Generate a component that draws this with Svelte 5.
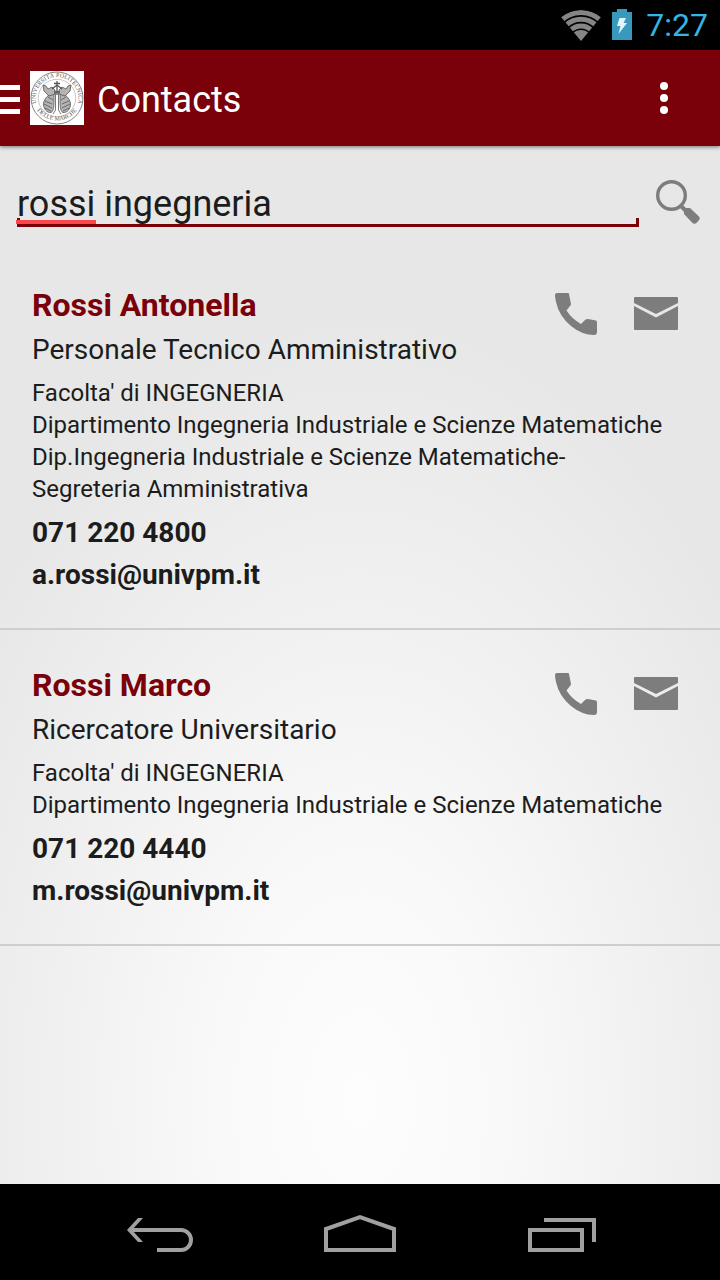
<script>
  let query = $state('rossi ingegneria');

  const contacts = [
    {
      name: 'Rossi Antonella',
      role: 'Personale Tecnico Amministrativo',
      units: [
        "Facolta' di INGEGNERIA",
        'Dipartimento Ingegneria Industriale e Scienze Matematiche',
        'Dip.Ingegneria Industriale e Scienze Matematiche-Segreteria Amministrativa'
      ],
      phone: '071 220 4800',
      email: 'a.rossi@univpm.it'
    },
    {
      name: 'Rossi Marco',
      role: 'Ricercatore Universitario',
      units: [
        "Facolta' di INGEGNERIA",
        'Dipartimento Ingegneria Industriale e Scienze Matematiche'
      ],
      phone: '071 220 4440',
      email: 'm.rossi@univpm.it'
    }
  ];
</script>

<div class="screen">
  <div class="status">
    <svg width="40" height="32" viewBox="0 0 40 32" aria-hidden="true">
      <defs><clipPath id="fan"><path d="M20 32 L0 8 Q20 -6 40 8Z" /></clipPath></defs>
      <g clip-path="url(#fan)" fill="none" stroke="#858585">
        <circle cx="20" cy="32" r="28.500" stroke-width="5" />
        <circle cx="20" cy="32" r="21.700" stroke-width="5" />
        <circle cx="20" cy="32" r="15" stroke-width="5" />
        <circle cx="20" cy="32" r="5.500" stroke-width="11" />
      </g>
    </svg>
    <svg width="20" height="32" viewBox="0 0 20 32" aria-hidden="true">
      <path d="M0 3H5V0H15V3H20V31H0Z" fill="#3899bd" />
      <path d="M7.500 9H14L11.500 14H15L6.500 25L8.500 17H5Z" fill="#e2f5fc" />
    </svg>
    <span class="clock">7:27</span>
  </div>

  <header class="bar">
    <button class="drawer" aria-label="Open navigation">
      <svg width="20" height="30" viewBox="0 0 20 30"><path d="M0 0H20V5H0ZM0 12H20V17H0ZM0 24H20V29H0Z" fill="#fff" /></svg>
    </button>
    <svg class="seal" width="54" height="54" viewBox="0 0 54 54" aria-hidden="true">
      <rect width="54" height="54" fill="#fff" />
      <defs>
        <path id="arcTop" d="M7.500 36A21.300 21.300 0 1 1 46.500 36" />
        <path id="arcBottom" d="M6 38A25 25 0 0 0 48 38" />
        <g id="griffin" fill="#b4b4b4" stroke="#555" stroke-width="0.8">
          <path d="M24 22C19 23 14 27 13.500 33C13.500 38 17 42 21 41.500C24 40 24 34 24 27Z" />
          <path d="M13 14L16 15L18 18L22 16L25 19V23L19 25L14 20Z" />
          <path d="M15 30L22 33M14 33L22 37M15 37L21 40M18 26L23 29M25.500 22V39L23 43" fill="none" />
        </g>
      </defs>
      <g fill="none" stroke="#777">
        <circle cx="27" cy="27" r="26" stroke-width="0.9" />
        <circle cx="27" cy="27" r="18.700" stroke-width="0.4" />
      </g>
      <g class="motto">
        <text><textPath href="#arcTop" startOffset="50%" text-anchor="middle">UNIVERSITÀ POLITECNICA</textPath></text>
        <text><textPath href="#arcBottom" startOffset="50%" text-anchor="middle">DELLE MARCHE</textPath></text>
      </g>
      <use href="#griffin" />
      <use href="#griffin" transform="translate(54 0) scale(-1 1)" />
      <path d="M27 10V24M24 12.500H30M22 18L27 14L32 18M24 21H30" fill="none" stroke="#555" stroke-width="1.300" />
    </svg>
    <h1>Contacts</h1>
    <button class="more" aria-label="More options">
      <svg width="8" height="32" viewBox="0 0 8 32" fill="#fff"><circle cx="4" cy="4" r="4" /><circle cx="4" cy="16" r="4" /><circle cx="4" cy="28" r="4" /></svg>
    </button>
  </header>

  <main>
    <form class="search" onsubmit={(e) => e.preventDefault()}>
      <div class="field">
        <input type="text" aria-label="Search contacts" spellcheck="false" bind:value={query} />
        <span class="typo"></span>
      </div>
      <button aria-label="Search">
        <svg width="44" height="44" viewBox="0 0 44 44">
          <circle cx="15.500" cy="15.500" r="13.800" fill="none" stroke="#7d7d7d" stroke-width="3.400" />
          <path d="M25 26L31 32" stroke="#7d7d7d" stroke-width="4" />
          <path d="M29 28H34L43 36.500Q44.500 38.500 43 40L40.500 43Q38.500 44.500 36.500 43L28 34V29Z" fill="#7d7d7d" />
        </svg>
      </button>
    </form>

    <ul>
      {#each contacts as c}
        <li>
          <div class="actions">
            <button aria-label="Call {c.name}">
              <svg width="44" height="44" viewBox="0 0 44 44"><path d="M3 1H14Q15 1 15 2L17 12Q17 13 16 14L12.500 18.500Q18 27 27 32L31 28Q32 27 34 27L42 28.500Q43 29 43 30V40Q43 43 40 43Q28 43 17 34Q5 24 2 10Q1 6 1 3Q1 1 3 1Z" fill="#7d7d7d" /></svg>
            </button>
            <button aria-label="Email {c.name}">
              <svg width="44" height="44" viewBox="0 0 44 44" fill="#7d7d7d"><path d="M1 5H43Q44 5 44 6V11L22 22L0 11V6Q0 5 1 5Z" /><path d="M0 14L22 25.500L44 14V37Q44 38 43 38H1Q0 38 0 37Z" /></svg>
            </button>
          </div>
          <h2>{c.name}</h2>
          <p class="role">{c.role}</p>
          <div class="units">
            {#each c.units as unit}<p>{unit}</p>{/each}
          </div>
          <p class="reach">{c.phone}</p>
          <p class="reach">{c.email}</p>
        </li>
      {/each}
    </ul>
  </main>

  <nav aria-label="System">
    <button aria-label="Back">
      <svg width="72" height="40" viewBox="0 0 72 40" fill="none" stroke="#a0a0a0" stroke-width="4"><path d="M8 16H57A10 10 0 0 1 57 36H33" /><path d="M3 16L14 4H19L8 16L19 28H14Z" fill="#a0a0a0" stroke="none" /></svg>
    </button>
    <button aria-label="Home">
      <svg width="72" height="40" viewBox="0 0 72 40" fill="none" stroke="#a0a0a0" stroke-width="4"><path d="M2 36V15L36 3L70 15V36Z" /></svg>
    </button>
    <button aria-label="Recent apps">
      <svg width="72" height="40" viewBox="0 0 72 40" fill="none" stroke="#a0a0a0" stroke-width="4"><path d="M6 16H58V36H6ZM20 6H70V28" /></svg>
    </button>
  </nav>
</div>

<style>
  :global(body) {
    margin: 0;
    background: #000;
  }
  .screen {
    min-height: 100vh;
    display: flex;
    flex-direction: column;
    font-family: Roboto, sans-serif;
    color: #1c1c1c;
  }
  button {
    border: 0;
    padding: 0;
    background: none;
    cursor: pointer;
  }
  svg {
    display: block;
    flex: none;
  }
  h1, h2, p, ul {
    margin: 0;
    padding: 0;
  }
  .status {
    height: 50px;
    display: flex;
    align-items: center;
    justify-content: flex-end;
    gap: 11px;
    padding-right: 12px;
    background: #000;
  }
  .clock {
    margin-left: 3px;
    font-size: 32px;
    line-height: 50px;
    color: #33b5e5;
  }
  .bar {
    position: relative;
    height: 96px;
    display: flex;
    align-items: center;
    background: #7a000a;
    color: #fff;
    box-shadow: 0 1px 4px rgba(0, 0, 0, 0.5);
  }
  .drawer {
    padding-top: 4px;
  }
  .seal {
    margin: 0 13px 0 10px;
  }
  .motto {
    font-family: "Liberation Serif", serif;
    font-size: 6px;
    fill: #555;
  }
  h1 {
    flex: 1;
    padding-top: 4px;
    font-size: 36px;
    font-weight: 400;
    line-height: 44px;
  }
  .more {
    width: 112px;
    display: flex;
    justify-content: center;
  }
  main {
    flex: 1;
    background: radial-gradient(ellipse 66% 76% at 50% 92%, #fdfdfd, #f9f9f9 30%, #e7e7e7);
  }
  .search {
    display: flex;
    align-items: flex-end;
    gap: 17px;
    padding: 33px 20px 23px 17px;
  }
  .field {
    position: relative;
    flex: 1;
    height: 48px;
    background:
      linear-gradient(#7a000a, #7a000a) right bottom / 3px 9px no-repeat,
      linear-gradient(#7a000a, #7a000a) left bottom / 3px 9px no-repeat,
      linear-gradient(#7a000a, #7a000a) left bottom / 100% 3px no-repeat;
  }
  input {
    display: block;
    box-sizing: border-box;
    width: 100%;
    height: 48px;
    padding: 2px 0 0;
    border: 0;
    outline: 0;
    background: none;
    font: 400 36px/46px Roboto, sans-serif;
    color: inherit;
  }
  .typo {
    position: absolute;
    left: -1px;
    bottom: 3px;
    width: 80px;
    height: 4px;
    background: #fa474b;
  }
  .search button {
    padding-bottom: 3px;
  }
  ul {
    list-style: none;
  }
  li {
    padding: 36px 42px 36px 32px;
    border-bottom: 2px solid #cecece;
  }
  .actions {
    float: right;
    display: flex;
    gap: 36px;
    padding-top: 6px;
  }
  h2 {
    font-size: 32px;
    line-height: 38px;
    font-weight: 700;
    color: #7a000a;
  }
  .role {
    margin-top: 9px;
    font-size: 28px;
    line-height: 34px;
  }
  .units {
    margin: 10px 0 11px;
    padding-right: 8px;
    font-size: 24px;
    line-height: 32px;
  }
  .reach {
    font-size: 28px;
    line-height: 34px;
    font-weight: 700;
  }
  .reach + .reach {
    margin-top: 8px;
  }
  nav {
    height: 96px;
    display: flex;
    align-items: center;
    justify-content: center;
    background: #000;
  }
  nav button {
    width: 200px;
    padding-top: 4px;
    display: flex;
    justify-content: center;
  }
</style>
